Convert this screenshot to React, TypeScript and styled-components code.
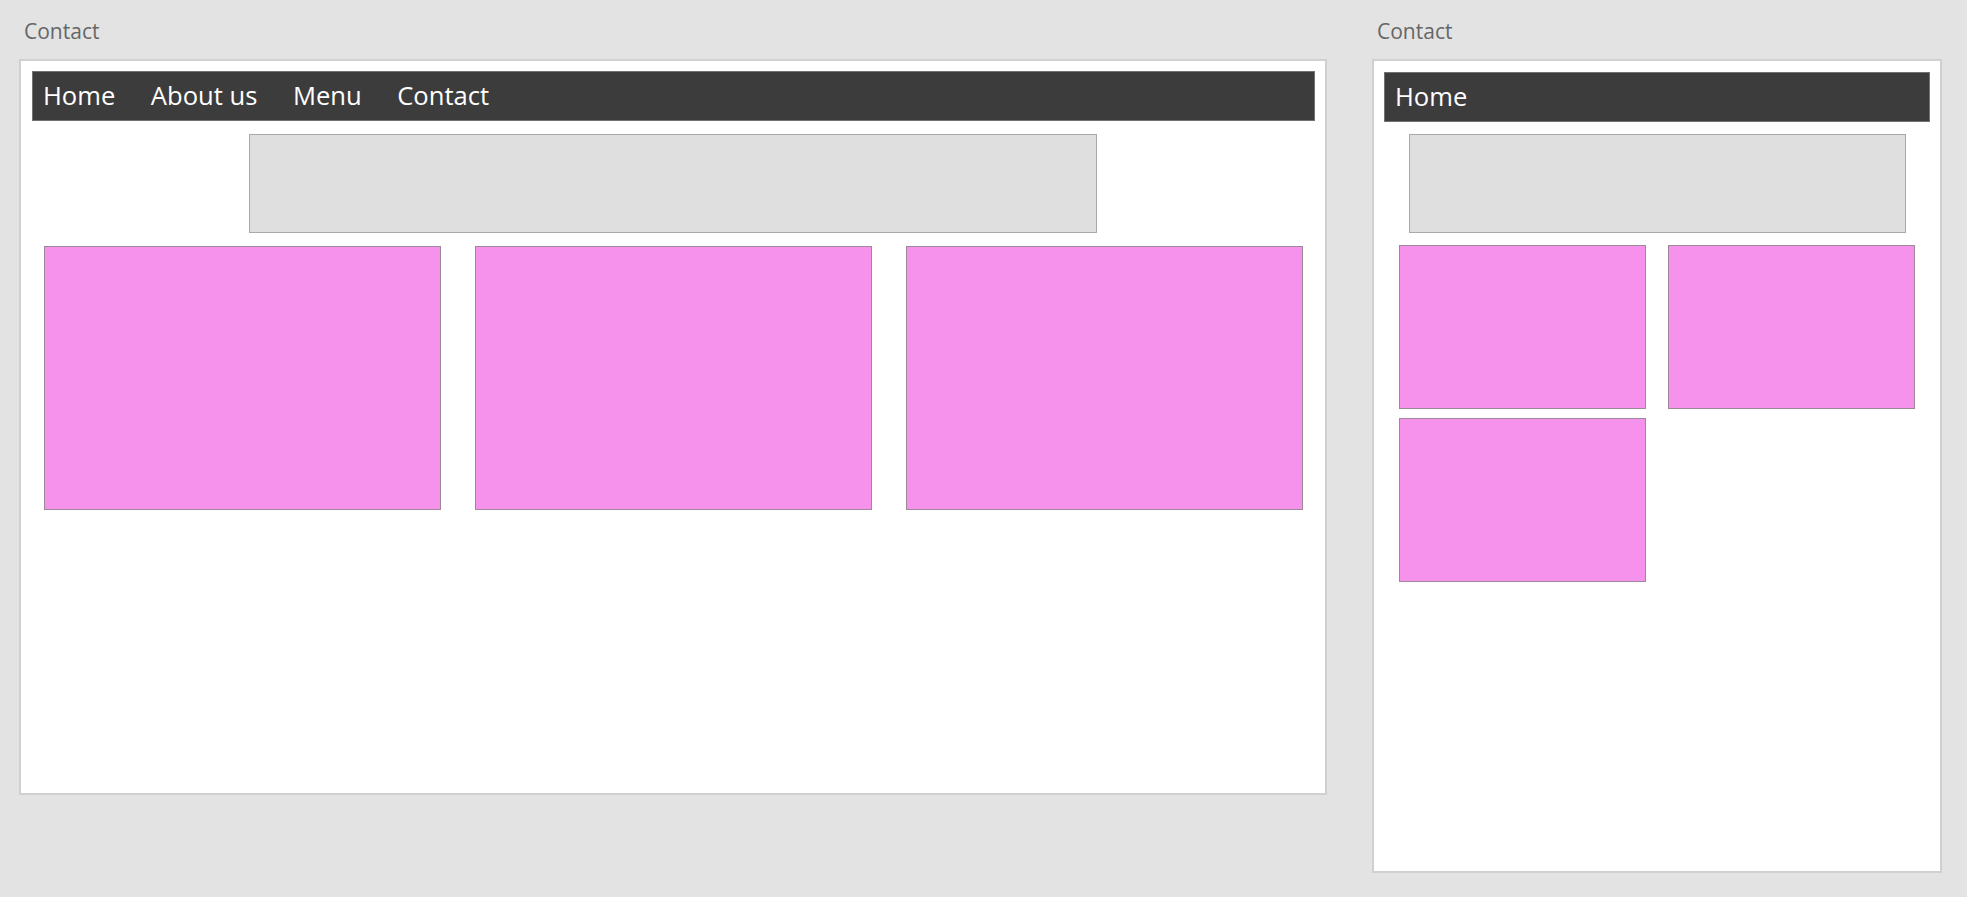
import styled, { createGlobalStyle } from "styled-components";

const GlobalStyle = createGlobalStyle`
  html, body {
    margin: 0;
    padding: 0;
    background: #e3e3e3;
    font-family: "Open Sans", "Noto Sans", sans-serif;
  }
`;

const Root = styled.div`
  display: flex;
  align-items: flex-start;
  gap: 45px;
  padding: 17px 0 0 19px;
  min-height: 880px;
  box-sizing: border-box;
`;

const Column = styled.div`
  display: flex;
  flex-direction: column;
`;

const Label = styled.div`
  height: 28px;
  line-height: 28px;
  margin: 0 0 14px 5px;
  font-size: 21px;
  color: #666666;
`;

const Frame = styled.div<{ $w: number; $h: number }>`
  width: ${(p) => p.$w}px;
  height: ${(p) => p.$h}px;
  box-sizing: border-box;
  background: #ffffff;
  border: 2px solid #d0d0d0;
  padding: 10px 10px 0 10px;
  display: flex;
  flex-direction: column;
`;

const NavBar = styled.nav<{ $top: number; $left: number }>`
  display: flex;
  align-items: center;
  gap: 35.5px;
  height: 50px;
  margin-top: ${(p) => p.$top}px;
  margin-left: ${(p) => p.$left}px;
  box-sizing: border-box;
  padding-left: 10px;
  background: #3c3c3c;
  border: 1px solid #727272;
`;

const NavItem = styled.span`
  color: #ffffff;
  font-size: 25.6px;
  line-height: 1;
`;

const Hero = styled.div<{ $w: number; $space: number }>`
  align-self: center;
  width: ${(p) => p.$w}px;
  height: 99px;
  margin-top: ${(p) => p.$space}px;
  box-sizing: border-box;
  background: #dfdfdf;
  border: 1px solid #a9a9a9;
`;

const CardGrid = styled.div<{
  $cols: number;
  $w: number;
  $h: number;
  $gx: number;
  $gy: number;
  $space: number;
}>`
  display: grid;
  grid-template-columns: repeat(${(p) => p.$cols}, ${(p) => p.$w}px);
  grid-auto-rows: ${(p) => p.$h}px;
  column-gap: ${(p) => p.$gx}px;
  row-gap: ${(p) => p.$gy}px;
  justify-content: center;
  margin-top: ${(p) => p.$space}px;
`;

const Card = styled.div`
  box-sizing: border-box;
  background: #f692eb;
  border: 1px solid #9a8a98;
`;

type Layout = {
  label: string;
  width: number;
  height: number;
  nav: string[];
  navTop: number;
  navLeft: number;
  space: number;
  heroWidth: number;
  cols: number;
  cardW: number;
  cardH: number;
  gapX: number;
  gapY: number;
};

const layouts: Layout[] = [
  {
    label: "Contact",
    width: 1308,
    height: 736,
    nav: ["Home", "About us", "Menu", "Contact"],
    navTop: 0,
    navLeft: 1,
    space: 13,
    heroWidth: 848,
    cols: 3,
    cardW: 397,
    cardH: 264,
    gapX: 34,
    gapY: 10,
  },
  {
    label: "Contact",
    width: 570,
    height: 814,
    nav: ["Home"],
    navTop: 1,
    navLeft: 0,
    space: 12,
    heroWidth: 497,
    cols: 2,
    cardW: 247,
    cardH: 164,
    gapX: 22,
    gapY: 9,
  },
];

function Mockup({ l }: { l: Layout }) {
  return (
    <Column>
      <Label>{l.label}</Label>
      <Frame $w={l.width} $h={l.height}>
        <NavBar $top={l.navTop} $left={l.navLeft}>
          {l.nav.map((n) => (
            <NavItem key={n}>{n}</NavItem>
          ))}
        </NavBar>
        <Hero $w={l.heroWidth} $space={l.space} />
        <CardGrid
          $cols={l.cols}
          $w={l.cardW}
          $h={l.cardH}
          $gx={l.gapX}
          $gy={l.gapY}
          $space={l.space}
        >
          <Card />
          <Card />
          <Card />
        </CardGrid>
      </Frame>
    </Column>
  );
}

export default function App() {
  return (
    <>
      <GlobalStyle />
      <Root>
        {layouts.map((l, i) => (
          <Mockup key={i} l={l} />
        ))}
      </Root>
    </>
  );
}
